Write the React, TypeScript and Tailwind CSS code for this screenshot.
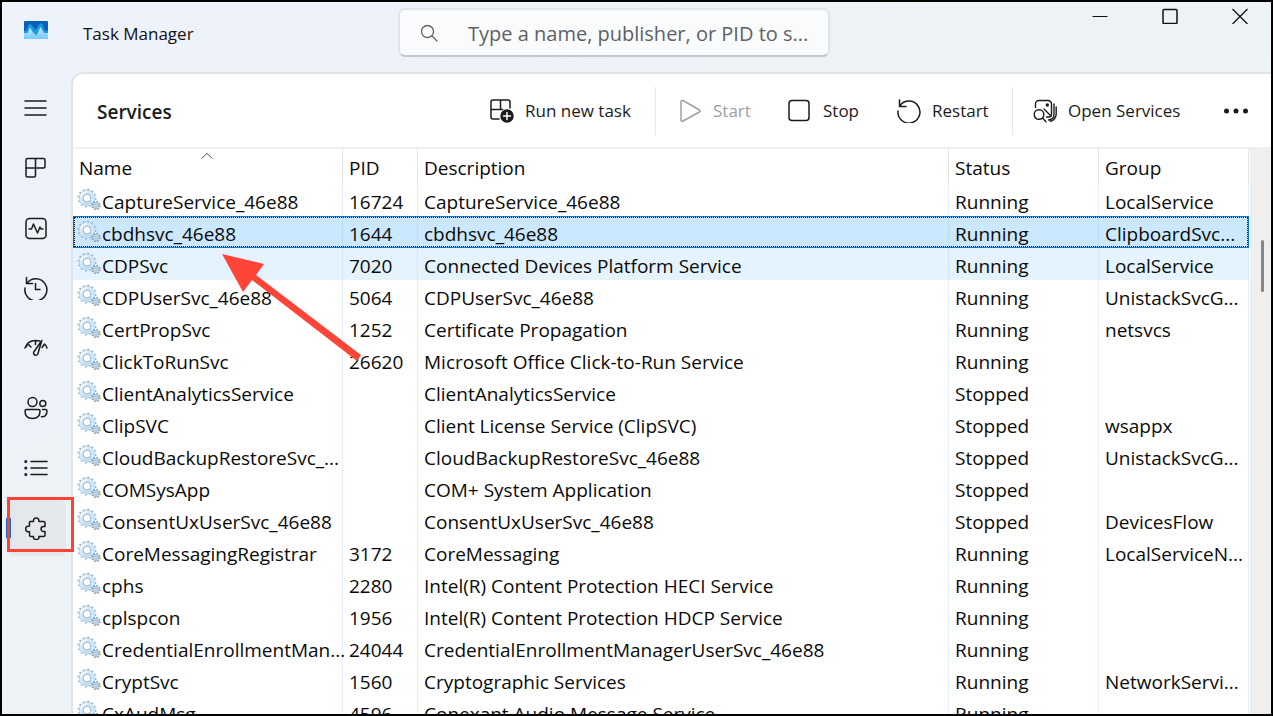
import type { ReactNode } from "react";
import clsx from "clsx";

type Service = {
  name: string;
  pid: string;
  description: string;
  status: string;
  group: string;
};

const services: Service[] = [
  { name: "CaptureService_46e88", pid: "16724", description: "CaptureService_46e88", status: "Running", group: "LocalService" },
  { name: "cbdhsvc_46e88", pid: "1644", description: "cbdhsvc_46e88", status: "Running", group: "ClipboardSvc..." },
  { name: "CDPSvc", pid: "7020", description: "Connected Devices Platform Service", status: "Running", group: "LocalService" },
  { name: "CDPUserSvc_46e88", pid: "5064", description: "CDPUserSvc_46e88", status: "Running", group: "UnistackSvcG..." },
  { name: "CertPropSvc", pid: "1252", description: "Certificate Propagation", status: "Running", group: "netsvcs" },
  { name: "ClickToRunSvc", pid: "26620", description: "Microsoft Office Click-to-Run Service", status: "Running", group: "" },
  { name: "ClientAnalyticsService", pid: "", description: "ClientAnalyticsService", status: "Stopped", group: "" },
  { name: "ClipSVC", pid: "", description: "Client License Service (ClipSVC)", status: "Stopped", group: "wsappx" },
  { name: "CloudBackupRestoreSvc_...", pid: "", description: "CloudBackupRestoreSvc_46e88", status: "Stopped", group: "UnistackSvcG..." },
  { name: "COMSysApp", pid: "", description: "COM+ System Application", status: "Stopped", group: "" },
  { name: "ConsentUxUserSvc_46e88", pid: "", description: "ConsentUxUserSvc_46e88", status: "Stopped", group: "DevicesFlow" },
  { name: "CoreMessagingRegistrar", pid: "3172", description: "CoreMessaging", status: "Running", group: "LocalServiceN..." },
  { name: "cphs", pid: "2280", description: "Intel(R) Content Protection HECI Service", status: "Running", group: "" },
  { name: "cplspcon", pid: "1956", description: "Intel(R) Content Protection HDCP Service", status: "Running", group: "" },
  { name: "CredentialEnrollmentMan...", pid: "24044", description: "CredentialEnrollmentManagerUserSvc_46e88", status: "Running", group: "" },
  { name: "CryptSvc", pid: "1560", description: "Cryptographic Services", status: "Running", group: "NetworkServi..." },
  { name: "CxAudMsg", pid: "4596", description: "Conexant Audio Message Service", status: "Running", group: "" },
];

const SELECTED = 1;
const HOVERED = 2;

const Icon = ({ children, width = 1.5 }: { children: ReactNode; width?: number }) => (
  <svg
    className="size-6 shrink-0"
    viewBox="0 0 24 24"
    fill="none"
    stroke="currentColor"
    strokeWidth={width}
    strokeLinecap="round"
    strokeLinejoin="round"
    aria-hidden="true"
  >
    {children}
  </svg>
);

const navItems: { label: string; icon: ReactNode }[] = [
  {
    label: "Open navigation",
    icon: <path d="M1 5h21M1 12h21M1 19h21" />,
  },
  {
    label: "Processes",
    icon: <path d="M3.5 2.5h16a1.5 1.5 0 0 1 1.5 1.5v6.5a1.5 1.5 0 0 1-1.5 1.5H11.5v7.5a1.5 1.5 0 0 1-1.5 1.5H3.5A1.5 1.5 0 0 1 2 19.5V4a1.5 1.5 0 0 1 1.5-1.5ZM11.5 2.5V12M2 12h9.5" />,
  },
  {
    label: "Performance",
    icon: (
      <>
        <rect x="2" y="2.5" width="20" height="20" rx="3.5" />
        <path d="M5 13h2.5l2-5 4 9 2.5-6 1 2h2" />
      </>
    ),
  },
  {
    label: "App history",
    icon: <path d="M2.5 1.5v6h6M3 7.3A11 11 0 1 1 1 12M11.500 7.500v6H16" />,
  },
  {
    label: "Startup apps",
    icon: (
      <>
        <path d="M1 12C2.500 7.500 6.500 4.500 11.500 4.500q2 0 4 .5M4.500 8.500 7 11M1 12l2-2.500M11.500 4.500v4" />
        <path d="M17.800 4.500 9.800 16a2.200 2.200 0 1 0 4 2l4-13.500ZM18 11.500l2.500-3.500q1.700 1.500 2.500 4" />
      </>
    ),
  },
  {
    label: "Users",
    icon: (
      <>
        <circle cx="8.5" cy="6" r="4.5" />
        <circle cx="18.8" cy="7.5" r="3" />
        <path d="M2.5 13.500h12q1.500 0 1.500 1.500c0 5-3 7.500-7.500 7.500S1 20 1 15q0-1.500 1.500-1.500ZM18.500 13.500h3q1.500 0 1.500 1.500c0 4-2 6-5.500 5.800" />
      </>
    ),
  },
  {
    label: "Details",
    icon: (
      <>
        <path d="M7 5.500h16M7 12h16M7 18.500h16" />
        <path strokeWidth="3" d="M1.800 5.500h.01M1.800 12h.01M1.800 18.500h.01" />
      </>
    ),
  },
  {
    label: "Services",
    icon: <path d="M6 5.500h3.500c-.3-2 .8-3.500 2.700-3.500s3 1.500 2.700 3.500h4.600A1.500 1.500 0 0 1 21 7v3.500h-1.500a2.500 2.500 0 0 0 0 5H21V19a1.500 1.500 0 0 1-1.500 1.500h-4.600c.3 2-.8 3-2.700 3s-3-1-2.700-3H7A1.500 1.500 0 0 1 5.500 19v-3.200c-2.500.3-3.800-1-3.800-2.900s1.300-3.200 3.800-2.900V6" />,
  },
];

const GearIcon = () => (
  <svg className="size-6 shrink-0" viewBox="0 0 24 24" fill="none" aria-hidden="true">
    <circle cx="10" cy="10" r="8.5" stroke="#9fb6c8" strokeWidth="1.800" strokeDasharray="1.800 2.651" />
    <circle cx="10" cy="10" r="6" stroke="#9cc0db" strokeWidth="4.400" />
    <circle cx="10" cy="10" r="6" stroke="#d3e9f9" strokeWidth="3.600" />
    <path d="M4 9A6 6 0 0 1 10 4" stroke="#f1faff" strokeWidth="2.200" />
    <path d="M6 14.500A6 6 0 0 0 15 13" stroke="#b9dcf5" strokeWidth="2" />
    <circle cx="10" cy="10" r="3.900" fill="#fff" stroke="#8ba4ba" strokeWidth=".8" />
    <circle cx="19" cy="17.500" r="3.800" stroke="#8399ae" strokeWidth="1.800" strokeDasharray="1.500 1.484" />
    <circle cx="19" cy="17.500" r="3" fill="#e2f1fc" stroke="#9ab5cb" />
    <circle cx="19" cy="17.500" r="1.300" fill="#fff" stroke="#7c95ac" strokeWidth=".8" />
  </svg>
);

const AppLogo = () => (
  <svg className="h-[18px] w-6" viewBox="0 0 24 18" aria-hidden="true">
    <defs>
      <linearGradient id="logo-front" x1="0" y1="0" x2="0" y2="1">
        <stop offset="0" stopColor="#c3e9ff" />
        <stop offset="1" stopColor="#74caff" />
      </linearGradient>
      <clipPath id="logo-clip">
        <rect width="24" height="18" rx="1" />
      </clipPath>
    </defs>
    <g clipPath="url(#logo-clip)">
      <rect width="24" height="18" fill="#0560b6" />
      <path d="M0 10h2l2.500-6q1.500-2 3 0l4 5 4-6q1.500-1.500 2.500 0l3 6.500h3V18H0Z" fill="#1a98e2" />
      <path d="M0 12h3.500L6 6.500l3 5 3.500 3 4-8.500 3.500 6h4v6H0Z" fill="url(#logo-front)" />
    </g>
  </svg>
);

const TitleBar = () => (
  <header className="flex h-[70px] shrink-0 items-start">
    <div className="flex h-16 w-[396px] shrink-0 items-center pl-[22px]">
      <div className="pb-2">
        <AppLogo />
      </div>
      <h1 className="ml-[35px] text-[17px] text-[#111]">Task Manager</h1>
    </div>
    <label className="mt-[6px] flex h-[49px] w-[432px] items-center rounded-[7px] border-2 border-[#e0e5ea] border-b-[#c5cace] bg-[#fafbfd] pl-5 text-[#5f6163]">
      <svg className="size-[18px] shrink-0" viewBox="0 0 18 18" fill="none" stroke="currentColor" strokeWidth="1.300" strokeLinecap="round" aria-hidden="true">
        <circle cx="7.5" cy="7.5" r="6" />
        <path d="m12 12 5 5" />
      </svg>
      <input
        type="text"
        aria-label="Search"
        placeholder="Type a name, publisher, or PID to s..."
        className="ml-[30px] min-w-0 flex-1 bg-transparent pt-[2px] text-[20px] outline-none placeholder:text-[#5f6163]"
      />
    </label>
    <div className="ml-auto flex gap-[22px] pr-[7px] text-[#111]">
      <button type="button" aria-label="Minimize" className="flex h-7 w-12 items-center justify-center">
        <svg className="size-4" viewBox="0 0 16 16" stroke="currentColor" aria-hidden="true">
          <path d="M.5 8.500h15" />
        </svg>
      </button>
      <button type="button" aria-label="Maximize" className="flex h-7 w-12 items-center justify-center">
        <svg className="size-4" viewBox="0 0 16 16" fill="none" stroke="currentColor" strokeWidth="1.500" aria-hidden="true">
          <rect x="1" y="1.500" width="14" height="14" rx="1" />
        </svg>
      </button>
      <button type="button" aria-label="Close" className="flex h-7 w-12 items-center justify-center">
        <svg className="size-4" viewBox="0 0 16 16" stroke="currentColor" strokeWidth="1.300" aria-hidden="true">
          <path d="m.5 1 15 15M15.500 1l-15 15" />
        </svg>
      </button>
    </div>
  </header>
);

const Sidebar = () => (
  <nav className="flex w-[69px] shrink-0 flex-col gap-1 pt-2 pl-[6px] text-[#1b1b1b]">
    {navItems.map((item) => {
      const active = item.label === "Services";
      return (
        <button
          key={item.label}
          type="button"
          aria-label={item.label}
          className={clsx(
            "relative flex h-14 shrink-0 items-center justify-center rounded-md",
            active ? "w-[58px] bg-[#e4e8ed] pr-[2px]" : "w-14"
          )}
        >
          {active && <span className="absolute top-[17px] -left-[2px] h-[22px] w-[5px] rounded-full bg-[#1467c0]" />}
          <Icon>{item.icon}</Icon>
          {active && <span className="absolute -top-[3px] -left-px h-[55px] w-[67px] border-3 border-[#fb4236]" />}
        </button>
      );
    })}
  </nav>
);

const Toolbar = () => (
  <div className="flex h-[75px] shrink-0 items-center border-b-2 border-[#efefef] pr-[23px] pl-6 text-[17px] text-[#1b1b1b]">
    <h2 className="mr-auto pt-1 text-[19px] font-semibold">Services</h2>
    <button type="button" className="flex w-[165px] items-center gap-[11px]">
      <Icon>
        <path d="M9 20H3a2 2 0 0 1-2-2V3a2 2 0 0 1 2-2h15a2 2 0 0 1 2 2v6M1 10.500h9.500V1M10.500 10.500h2" />
        <circle cx="17" cy="17" r="6" fill="currentColor" />
        <path d="M13.500 17h7M17 13.500v7" stroke="#fff" />
      </Icon>
      Run new task
    </button>
    <span className="mr-6 h-12 w-px bg-[#e8e8e8]" />
    <button type="button" disabled className="flex w-[108px] items-center gap-[9px] text-[#a0a0a0]">
      <Icon>
        <path d="M1 3v18q0 2 2 1l16.500-9q1.500-1 0-2L3 1.500Q1 1 1 3Z" />
      </Icon>
      Start
    </button>
    <button type="button" className="flex w-[109px] items-center gap-[11px]">
      <Icon>
        <rect x="1" y="1.500" width="20" height="20" rx="3" />
      </Icon>
      Stop
    </button>
    <button type="button" className="flex w-[115px] items-center gap-[11px]">
      <Icon>
        <path d="M2.500 1v6.500H9M2.800 7A11 11 0 1 1 1 12" />
      </Icon>
      Restart
    </button>
    <span className="mr-5 h-12 w-px bg-[#e8e8e8]" />
    <button type="button" className="flex w-[191px] items-center gap-[11px]">
      <Icon width={1.4}>
        <path d="M2.500 8.500V5A3.500 3.500 0 0 1 6 1.500h9A3.500 3.500 0 0 1 18.500 5v10a3 3 0 0 1-3 3h-2M21 5v10.500c0 3-2 5-5.500 5.500M23.200 8v7c0 4-3 7-6 7.300" />
        <circle cx="6" cy="15.500" r="4.800" />
        <path d="m9.500 19 3.500 3.800M11 10l7 7" />
        <circle cx="14.300" cy="6" r="1" fill="currentColor" />
      </Icon>
      Open Services
    </button>
    <button type="button" aria-label="More options">
      <svg className="size-6" viewBox="0 0 24 24" fill="currentColor" aria-hidden="true">
        <circle cx="2.500" cy="12" r="2.500" />
        <circle cx="12" cy="12" r="2.500" />
        <circle cx="21.500" cy="12" r="2.500" />
      </svg>
    </button>
  </div>
);

const ServicesTable = () => (
  <div className="flex min-h-0 flex-1">
    <div className="min-w-0 flex-1 overflow-hidden">
      <table className="w-full table-fixed border-separate border-spacing-0 text-left text-[19px] leading-8 text-[#0a0a0a]">
        <colgroup>
          <col className="w-[270px]" />
          <col className="w-[75px]" />
          <col />
          <col className="w-[150px]" />
          <col className="w-[150px]" />
        </colgroup>
        <thead>
          <tr className="h-[35px] [&>th]:border-r [&>th]:border-[#e3e3e3] [&>th]:p-0 [&>th]:pt-[3px] [&>th]:pl-[6px] [&>th]:font-normal">
            <th className="relative">
              Name
              <svg className="absolute top-[3px] left-32 h-[7px] w-3" viewBox="0 0 12 7" fill="none" stroke="#555" aria-hidden="true">
                <path d="m.5 6.500 5.500-5 5.500 5" />
              </svg>
            </th>
            <th>PID</th>
            <th>Description</th>
            <th>Status</th>
            <th>Group</th>
          </tr>
        </thead>
        <tbody>
          {services.map((service, i) => (
            <tr
              key={service.name}
              className={clsx(
                "relative h-8 [&>td]:h-8 [&>td]:border-r [&>td]:p-0 [&>td]:pl-[6px] [&>td]:whitespace-nowrap",
                i === SELECTED && "bg-[#cce8ff] [&>td]:border-[#b9dcf7]",
                i === HOVERED && "bg-[#e5f3ff] [&>td]:border-[#d3e8fa]",
                i !== SELECTED && i !== HOVERED && "[&>td]:border-[#e6f0fb]"
              )}
            >
              <td>
                <div className="-ml-[2px] flex h-8 items-center gap-px">
                  <GearIcon />
                  <span className="pt-1">{service.name}</span>
                </div>
                {i === SELECTED && (
                  <span className="absolute inset-0 border border-[#0078d7]">
                    <span className="block h-full border border-dotted border-[#111]" />
                  </span>
                )}
              </td>
              <td>
                <div className="h-8 pt-[2px]">{service.pid}</div>
              </td>
              <td>
                <div className="h-8 pt-[2px]">{service.description}</div>
              </td>
              <td>
                <div className="h-8 pt-[2px]">{service.status}</div>
              </td>
              <td>
                <div className="h-8 pt-[2px]">{service.group}</div>
              </td>
            </tr>
          ))}
        </tbody>
      </table>
    </div>
    <div className="ml-px w-[21px] shrink-0 bg-[#efefef] pt-[91px] pl-[11px]">
      <div className="h-[52px] w-[3px] rounded-full bg-[#868686]" />
    </div>
  </div>
);

// Red pointer drawn over the list, aimed at the selected service
const PointerArrow = () => (
  <svg className="pointer-events-none absolute top-[252px] left-[220px] h-[107px] w-[140px]" viewBox="0 0 140 107" fill="#ff4438" aria-hidden="true">
    <path d="M0 0 42 10 34 21 139 101 135 107 30 26 21 38Z" />
  </svg>
);

export default function App() {
  return (
    <div className="relative flex h-screen w-full flex-col overflow-hidden border-2 border-black bg-linear-to-br from-[#eef2fb] via-[#edf2f6] to-[#eef3fc] font-['Open_Sans','Noto_Sans',sans-serif]">
      <TitleBar />
      <div className="flex min-h-0 flex-1">
        <Sidebar />
        <main className="flex min-w-0 flex-1 flex-col overflow-hidden rounded-tl-xl border-t-2 border-l-2 border-[#e0e5ea] bg-white">
          <Toolbar />
          <ServicesTable />
        </main>
      </div>
      <PointerArrow />
    </div>
  );
}
